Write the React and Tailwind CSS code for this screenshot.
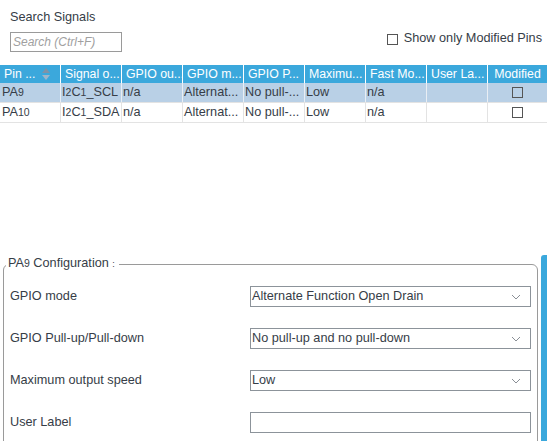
import React from 'react';

const cols = ['Pin ...', 'Signal o...', 'GPIO ou...', 'GPIO m...', 'GPIO P...', 'Maximu...', 'Fast Mo...', 'User La...', 'Modified'];

const rows = [
  { pin: ['PA', '9'], signal: ['I', '2', 'C', '1', '_SCL'], selected: true },
  { pin: ['PA', '10'], signal: ['I', '2', 'C', '1', '_SDA'], selected: false },
];

// digits in the source font are drawn small (old-style figures)
const Mixed = ({ parts }) => (
  <>
    {parts.map((p, i) =>
      /^\d+$/.test(p) ? (
        <span key={i} className="text-[10.5px]">{p}</span>
      ) : (
        <span key={i}>{p}</span>
      )
    )}
  </>
);

const Box = () => <span className="block w-[11px] h-[11px] border border-[#555]" />;

const Chevron = () => (
  <svg width="10" height="6" viewBox="0 0 10 6" className="shrink-0">
    <polyline points="1,1 5,5 9,1" fill="none" stroke="#8a8f96" strokeWidth="1" />
  </svg>
);

const SelectField = ({ value }) => (
  <div className="w-[281px] h-[21px] border border-[#8c939a] flex items-center justify-between pl-[1px] pr-[9px]">
    <span>{value}</span>
    <Chevron />
  </div>
);

const configRows = [
  { label: 'GPIO mode', value: 'Alternate Function Open Drain' },
  { label: 'GPIO Pull-up/Pull-down', value: 'No pull-up and no pull-down' },
  { label: 'Maximum output speed', value: 'Low' },
];

export default function App() {
  return (
    <div className="w-[547px] h-[441px] overflow-hidden bg-white font-['Liberation_Sans',Arial,sans-serif] text-[#363d47]">
      <div className="h-[65px] pt-[9px] pl-[10px] pr-[5px]">
        <div className="text-[12.7px] leading-[16px]">Search Signals</div>
        <div className="flex items-start justify-between mt-[7px]">
          <div className="w-[112px] h-[20px] border border-[#9a9a9a] flex items-center pl-[2px]">
            <span className="italic text-[12px] text-[#a0a0a0]">Search (Ctrl+F)</span>
          </div>
          <label className="flex items-center gap-[6px] mt-[-1px] h-[16px] text-[12.7px]">
            <Box />
            <span>Show only Modified Pins</span>
          </label>
        </div>
      </div>

      <div className="text-[12.7px]">
        <div className="flex h-[18px] bg-[#3ba8dc] text-white text-[12.3px]">
          {cols.map((c, i) => (
            <div
              key={c}
              className={
                'h-full flex items-center leading-none whitespace-nowrap overflow-hidden ' +
                (i === 8 ? 'w-[59px] justify-center' : 'w-[61px] shrink-0 border-r border-white pl-[4px]')
              }
            >
              <span>{c}</span>
              {i === 0 && (
                <svg width="8" height="12" viewBox="0 0 8 12" className="ml-[7px] shrink-0">
                  <polygon points="4,0 8,5 0,5" fill="#7f93a8" />
                  <polygon points="0,7 8,7 4,12" fill="#9fb5c9" />
                </svg>
              )}
            </div>
          ))}
        </div>
        {rows.map((r, ri) => {
          const cells = [
            <Mixed parts={r.pin} />,
            <Mixed parts={r.signal} />,
            'n/a',
            'Alternat...',
            'No pull-...',
            'Low',
            'n/a',
            '',
          ];
          return (
            <div
              key={ri}
              className={'flex h-[20px] border-b border-[#e3e3e3] ' + (r.selected ? 'bg-[#b9d0e6]' : 'bg-white')}
            >
              {cells.map((c, i) => (
                <div
                  key={i}
                  className={
                    'w-[61px] shrink-0 h-full flex items-center border-r whitespace-nowrap overflow-hidden ' +
                    (r.selected ? 'border-[#e9eef4] ' : 'border-[#e3e3e3] ') +
                    (i === 0 ? 'pl-[2px]' : 'pl-[1px]')
                  }
                >
                  {c}
                </div>
              ))}
              <div className="w-[59px] h-full flex items-center justify-center">
                <Box />
              </div>
            </div>
          );
        })}
      </div>

      <div className="flex h-[186px] mt-[132px]">
        <fieldset className="ml-[3px] mt-[1px] w-[535px] h-[200px] shrink-0 border border-[#9a9a9a] rounded-t-[6px] text-[12.7px]">
          <legend className="ml-[2px] pl-[2px] pr-[4px] leading-[15px]">
            PA<span className="text-[10.5px]">9</span> Configuration <span className="text-[9px]">:</span>
          </legend>
          <div className="flex flex-col gap-[21px] pt-[14px] pl-[6px] pr-[6px]">
            {configRows.map((r) => (
              <div key={r.label} className="flex items-center justify-between h-[21px]">
                <span>{r.label}</span>
                <SelectField value={r.value} />
              </div>
            ))}
            <div className="flex items-center justify-between h-[21px]">
              <span>User Label</span>
              <div className="w-[281px] h-[21px] border border-[#8c939a]" />
            </div>
          </div>
        </fieldset>
        <div className="ml-[3px] w-[6px] h-full bg-[#3ba8dc] rounded-tl-[3px]" />
      </div>
    </div>
  );
}
